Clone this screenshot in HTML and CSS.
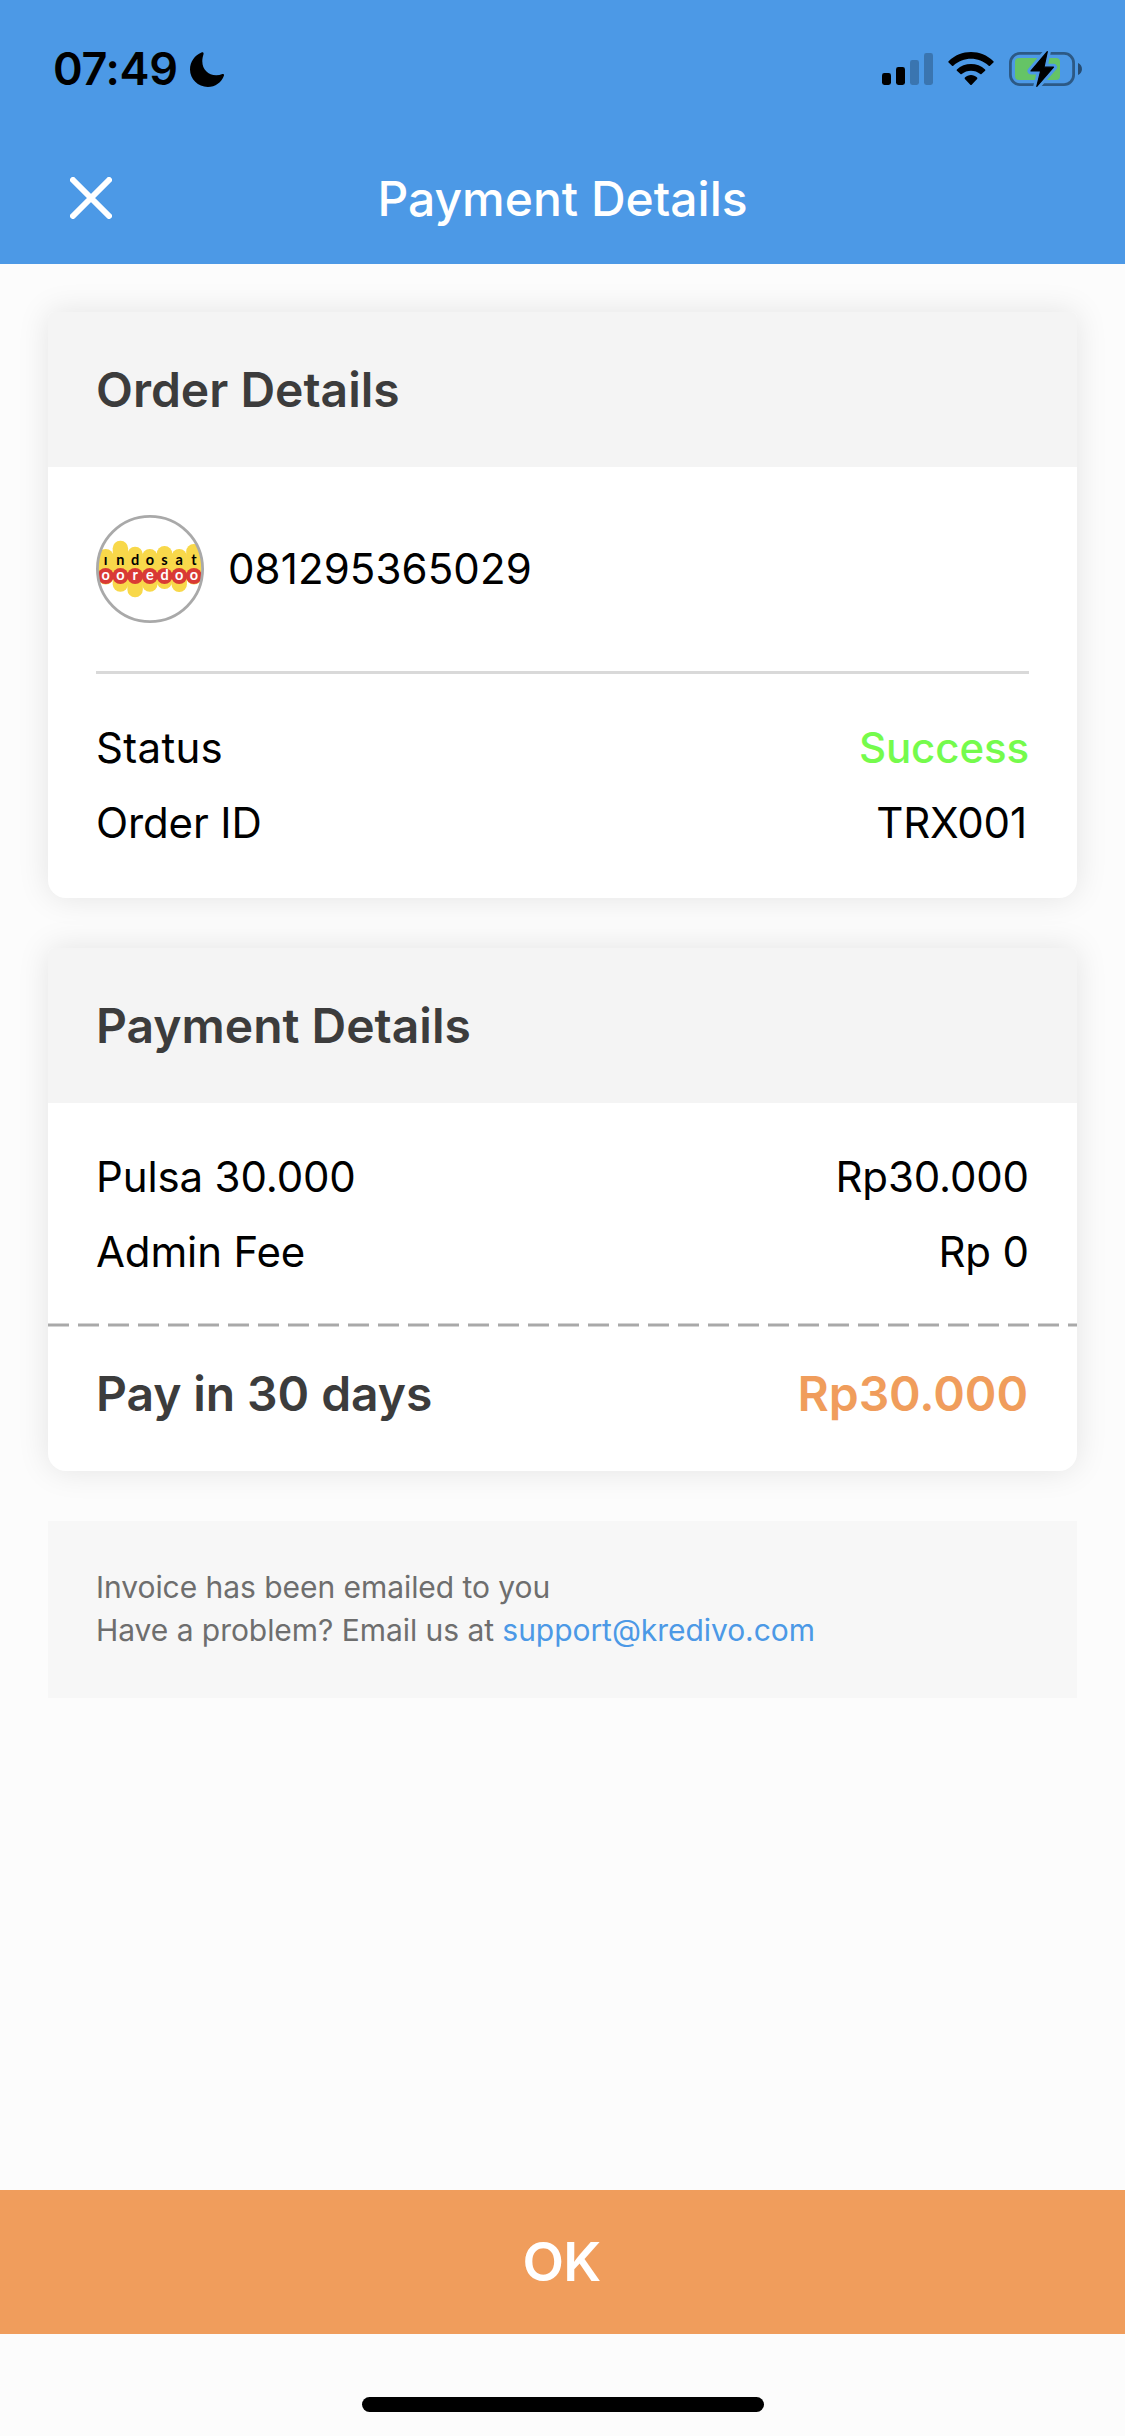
FILE: index.html
```html
<!DOCTYPE html>
<html lang="en">
<head>
<meta charset="utf-8">
<title>Payment Details</title>
<link rel="stylesheet" href="styles.css">
</head>
<body>
<div class="screen">
  <header class="top">
    <div class="status-bar">
      <div class="clock">
        <span class="time">07:49</span>
        <svg class="moon" viewBox="0 0 34 35" width="34" height="35"><path d="M11.5.4C13 0 13.9.9 13.500 2.300C12.800 4.500 12.300 7 12.300 9.300C12.300 17.500 18.200 23.300 26.200 23.300C28.300 23.300 30.500 22.900 32.400 22.100C33.600 21.600 34.400 22.300 34 23.500C31.600 30.300 25.300 35 17.800 35C8 35 0 27.300 0 17.600C0 9.900 4.700 2.900 11.500.4Z"/></svg>
      </div>
      <div class="indicators">
        <svg viewBox="0 0 51 34" width="51" height="34"><rect y="21" width="9" height="12" rx="2.400"/><rect x="14" y="15" width="9" height="18" rx="2.400"/><g opacity=".23"><rect x="28" y="8" width="9" height="25" rx="2.400"/><rect x="42" y="1" width="9" height="32" rx="2.400"/></g></svg>
        <svg viewBox="0 0 46 34" width="46" height="34"><path d="M.6 9.300C13-3 33-3 45.400 9.300Q46 10 45.400 10.600L42 13.800Q41.300 14.300 40.700 13.800C30.500 4.500 15.500 4.500 5.300 13.800Q4.700 14.300 4 13.800L.6 10.600Q0 10 .6 9.300Z"/><path d="M8.900 17.500C16.600 10.200 29.400 10.200 37.100 17.500Q37.700 18.200 37.100 18.800L33.500 22.100Q32.900 22.600 32.300 22.100C27.200 17.500 18.800 17.500 13.700 22.100Q13.100 22.600 12.500 22.100L8.900 18.800Q8.300 18.200 8.900 17.500Z"/><path d="M16.900 25.600C20.200 22.200 25.800 22.200 29.100 25.600Q29.700 26.300 29.100 26.900L23.700 32.700Q23 33.400 22.300 32.700L16.900 26.900Q16.300 26.300 16.900 25.600Z"/></svg>
        <svg class="battery" viewBox="0 -1 73 36" width="73" height="36"><rect class="shell" x="1.400" y="1.400" width="63.200" height="31.200" rx="9.500"/><path class="nub" d="M69 11C74.300 13 74.300 21 69 23Z"/><rect class="charge" x="6" y="6" width="45" height="22" rx="4"/><path class="bolt-gap" d="M38.300-.3L22 19H31.700L27.800 34.300L44.500 15.200H35Z"/><path class="bolt" d="M38.300-.3L22 19H31.700L27.800 34.300L44.500 15.200H35Z"/></svg>
      </div>
    </div>
    <nav class="nav-bar">
      <svg class="close" viewBox="0 0 42 42" width="42" height="42"><path d="M3 3L39 39M39 3L3 39"/></svg>
      <h1 class="title">Payment Details</h1>
    </nav>
  </header>

  <main class="content">
    <section class="card">
      <h2 class="card-head">Order Details</h2>
      <div class="card-body order">
        <div class="account">
          <svg class="logo" viewBox="0 0 108 108" width="108" height="108">
            <defs><clipPath id="disc"><circle cx="54" cy="54" r="52"/></clipPath></defs>
            <circle cx="54" cy="54" r="52.600" fill="#fff"/>
            <g clip-path="url(#disc)">
              <g class="blob">
                <rect x="2" y="34" width="15.400" height="35.500" rx="7.500"/>
                <rect x="16.700" y="25.700" width="15.400" height="51" rx="7.500"/>
                <rect x="31.400" y="31.700" width="15.400" height="50.500" rx="7.500"/>
                <rect x="46.100" y="34" width="15.400" height="42.700" rx="7.500"/>
                <rect x="60.800" y="31" width="15.400" height="43" rx="7.500"/>
                <rect x="75.500" y="34" width="15.400" height="43" rx="7.500"/>
                <rect x="90.200" y="29" width="15.400" height="40.500" rx="7.500"/>
              </g>
              <g class="dots"><circle cx="9.700" cy="61" r="8"/><circle cx="24.400" cy="61" r="8"/><circle cx="39.100" cy="61" r="8"/><circle cx="53.800" cy="61" r="8"/><circle cx="68.500" cy="61" r="8"/><circle cx="83.200" cy="61" r="8"/><circle cx="97.900" cy="61" r="8"/></g>
              <text class="mark" y="50" x="9.700 24.400 39.100 53.800 68.500 83.200 97.900">ındosat</text>
              <text class="mark light" y="65" x="9.700 24.400 39.100 53.800 68.500 83.200 97.900">ooredoo</text>
            </g>
            <circle class="ring" cx="54" cy="54" r="52.600"/>
          </svg>
          <span class="phone">081295365029</span>
        </div>
        <div class="row"><span class="wide">Status</span><span class="success">Success</span></div>
        <div class="row"><span>Order ID</span><span class="code">TRX001</span></div>
      </div>
    </section>

    <section class="card">
      <h2 class="card-head">Payment Details</h2>
      <div class="card-body fees">
        <div class="row"><span>Pulsa 30.000</span><span>Rp30.000</span></div>
        <div class="row"><span>Admin Fee</span><span>Rp 0</span></div>
      </div>
      <svg class="dashes" viewBox="0 0 1029 4" width="1029" height="4"><path d="M0 2H1029"/></svg>
      <div class="total"><span>Pay in 30 days</span><span class="amount">Rp30.000</span></div>
    </section>

    <aside class="note">
      <p>Invoice has been emailed to you</p>
      <p>Have a problem? Email us at <a class="link">support@kredivo.com</a></p>
    </aside>
  </main>

  <button class="ok">OK</button>
  <footer class="home"><div class="home-bar"></div></footer>
</div>
</body>
</html>
```
FILE: styles.css
```css
* { box-sizing: border-box; margin: 0; padding: 0; }
body { background: #fcfcfc; font-family: Inter, "Liberation Sans", sans-serif; font-size: 42px; color: #000; }
svg { display: block; flex: none; }
.screen { width: 1125px; height: 2436px; display: flex; flex-direction: column; }

.top { height: 264px; background: #4c99e6; }
.status-bar { height: 138px; padding: 0 43px 0 53px; display: flex; justify-content: space-between; align-items: center; }
.clock { display: flex; align-items: center; gap: 12px; }
.time { font-size: 45px; font-weight: 560; line-height: 54px; letter-spacing: -.35px; }
.indicators { display: flex; align-items: center; gap: 15px; }
.shell { fill: none; stroke: #000; stroke-opacity: .42; stroke-width: 2.8; }
.nub { fill: #000; fill-opacity: .5; }
.charge { fill: #65c466; }
.bolt-gap { fill: #4c99e6; stroke: #4c99e6; stroke-width: 7; stroke-linejoin: round; }
.bolt { fill: #000; stroke: #000; stroke-width: 1.2; stroke-linejoin: round; }

.nav-bar { height: 120px; padding: 0 70px; display: grid; grid-template-columns: 42px 1fr 42px; align-items: center; }
.close { fill: none; stroke: #fff; stroke-width: 6; stroke-linecap: round; }
.title { padding-top: 2px; color: #fff; font-size: 48px; font-weight: 500; line-height: 58px; text-align: center; }

.content { flex: 1; padding: 48px 48px 0; }
.card { width: 1029px; background: #fff; border-radius: 6px 6px 18px 18px; margin-bottom: 50px; box-shadow: 0 0 32px rgba(0, 0, 0, .1); overflow: hidden; }
.card-head { height: 155px; padding: 0 48px; display: flex; align-items: center; background: #f4f4f4; color: #3c3c3c; font-size: 48px; font-weight: 600; }
.card-body { padding: 0 48px; }
.account { height: 207px; margin-bottom: 36px; display: flex; align-items: center; gap: 24px; border-bottom: 3px solid #d9d9d9; }
.phone { padding-bottom: 2px; letter-spacing: .12px; }
.order { padding-bottom: 38px; }
.row { height: 75px; display: flex; align-items: center; justify-content: space-between; letter-spacing: -.13px; }
.wide { letter-spacing: .3px; }
.success { color: #75fb4c; font-weight: 500; letter-spacing: -.1px; }
.code { padding-right: 2px; letter-spacing: -.1px; }

.blob { fill: #f8d84a; }
.dots { fill: #d93a35; }
.mark { font-family: Lato, Inter, sans-serif; font-size: 14.500px; font-weight: 700; text-anchor: middle; fill: #000; }
.light { fill: #fff; }
.ring { fill: none; stroke: #a9a9a9; stroke-width: 2.800; }

.fees { padding-top: 36px; padding-bottom: 34px; }
.dashes { fill: none; stroke: #a9a9a9; stroke-width: 3; stroke-dasharray: 21 9; }
.total { height: 144px; padding: 0 49px 11px 48px; display: flex; align-items: center; justify-content: space-between; color: #3c3c3c; font-size: 48px; font-weight: 600; letter-spacing: -.08px; }
.amount { color: #f09d5c; }

.note { width: 1029px; height: 177px; padding: 45px 48px 0; background: #f7f7f7; color: #6e6e6e; font-size: 30px; line-height: 43px; letter-spacing: -.05px; }
.link { color: #4c99e6; }

.ok { height: 144px; flex: none; padding: 0 2px 1px 0; border: 0; background: #f09d5c; color: #fff; font: 600 54px Inter, "Liberation Sans", sans-serif; letter-spacing: -.8px; }
.home { height: 102px; flex: none; padding-top: 63px; display: flex; justify-content: center; }
.home-bar { width: 402px; height: 15px; border-radius: 8px; background: #000; }
```
